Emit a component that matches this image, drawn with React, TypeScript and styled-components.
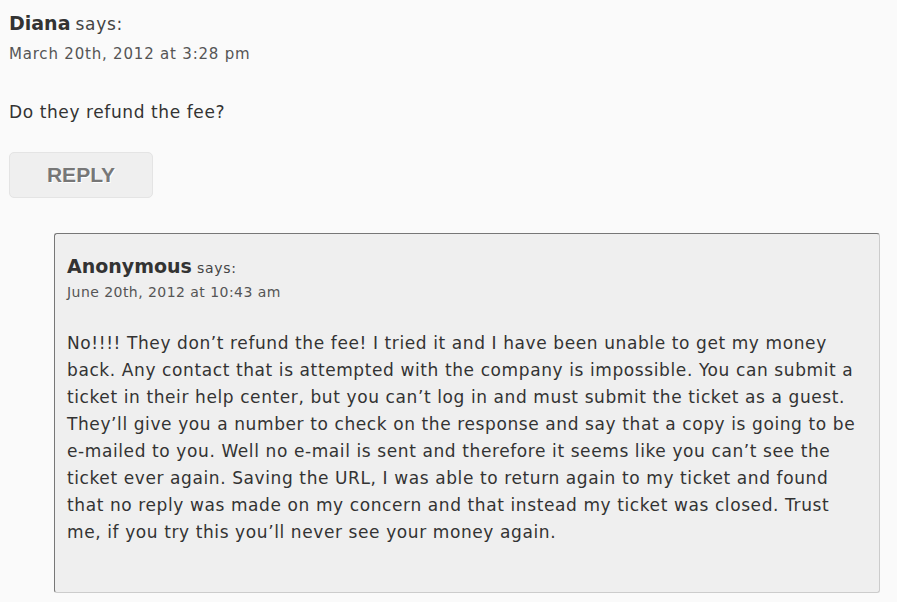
import React from 'react';
import styled, { createGlobalStyle } from 'styled-components';

const GlobalStyle = createGlobalStyle`
  body {
    margin: 0;
    background: #fafafa;
    font-family: 'DejaVu Sans', Verdana, sans-serif;
    color: #333;
  }
`;

const Page = styled.div`
  padding: 11px 9px 0 9px;
  height: 602px;
  box-sizing: border-box;
  overflow: hidden;
`;

const Meta = styled.div`
  line-height: 24px;
`;

const Author = styled.b<{ size: number }>`
  font-size: ${(p) => p.size}px;
  font-weight: bold;
  color: #333;
`;

const Says = styled.span<{ size: number }>`
  font-size: ${(p) => p.size}px;
  color: #444;
  letter-spacing: 0.7px;
`;

const Date = styled.div<{ size: number; gap: number; spacing: number }>`
  font-size: ${(p) => p.size}px;
  color: #555;
  margin-top: ${(p) => p.gap}px;
  letter-spacing: ${(p) => p.spacing}px;
`;

const Text = styled.p<{ gap: number }>`
  font-size: 17px;
  line-height: 27px;
  margin: ${(p) => p.gap}px 0 0 0;
  color: #333;
  letter-spacing: 0.6px;
`;

const ReplyButton = styled.button`
  display: block;
  margin-top: 26px;
  width: 144px;
  height: 46px;
  background: #efefef;
  border: 1px solid #e4e4e4;
  border-radius: 5px;
  font-family: 'Liberation Sans', Arial, sans-serif;
  font-weight: bold;
  font-size: 21px;
  color: #777;
  text-shadow: 1px 1px 0 #fff;
`;

const Child = styled.div`
  margin: 35px 8px 0 45px;
  height: 360px;
  box-sizing: border-box;
  background: #efefef;
  border: 1px solid;
  border-color: #777 #ccc #ccc #777;
  border-radius: 3px;
  padding: 20px 12px 0 12px;
`;

export default function App() {
  return (
    <Page>
      <GlobalStyle />
      <Meta>
        <Author size={19}>Diana</Author> <Says size={17}>says:</Says>
      </Meta>
      <Date size={15} gap={8} spacing={0.8}>March 20th, 2012 at 3:28 pm</Date>
      <Text gap={36}>Do they refund the fee?</Text>
      <ReplyButton>REPLY</ReplyButton>
      <Child>
        <Meta>
          <Author size={19}>Anonymous</Author> <Says size={14}>says:</Says>
        </Meta>
        <Date size={14} gap={4} spacing={0.45}>June 20th, 2012 at 10:43 am</Date>
        <Text gap={30}>
          No!!!! They don’t refund the fee! I tried it and I have been unable to get my money
          back. Any contact that is attempted with the company is impossible. You can submit a
          ticket in their help center, but you can’t log in and must submit the ticket as a guest.
          They’ll give you a number to check on the response and say that a copy is going to be
          e-mailed to you. Well no e-mail is sent and therefore it seems like you can’t see the
          ticket ever again. Saving the URL, I was able to return again to my ticket and found
          that no reply was made on my concern and that instead my ticket was closed. Trust me,
          if you try this you’ll never see your money again.
        </Text>
      </Child>
    </Page>
  );
}
